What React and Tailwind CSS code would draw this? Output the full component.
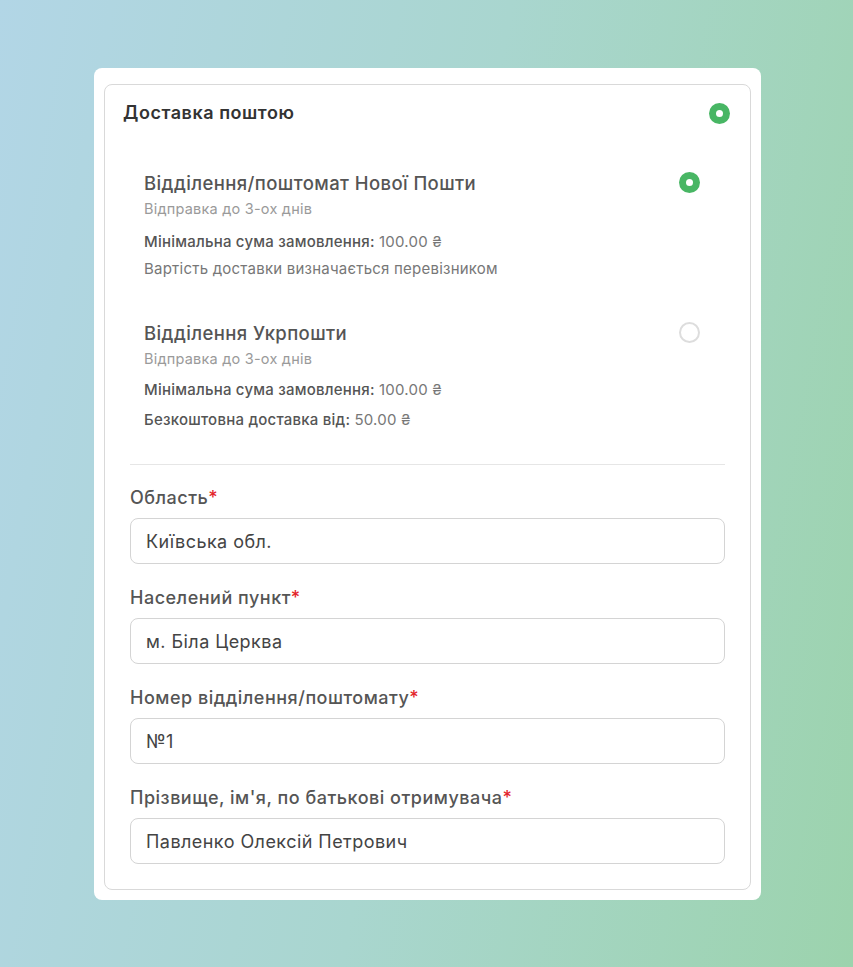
import React from "react";

function Radio({ checked }) {
  return checked ? (
    <span className="flex h-[21px] w-[21px] items-center justify-center rounded-full bg-[#48b664]">
      <span className="h-[7px] w-[7px] rounded-full bg-white" />
    </span>
  ) : (
    <span className="block h-[21px] w-[21px] rounded-full border-2 border-[#dddddd] bg-white" />
  );
}

function Option({ title, checked, lines }) {
  return (
    <div className="flex items-start justify-between pl-[39px] pr-[50px]">
      <div className="flex flex-col">
        <div className="text-[18.5px] leading-[24px] font-medium tracking-[0.022em] text-[#555555]">{title}</div>
        <div className="mt-[4px] text-[14.5px] leading-[20px] tracking-[0.015em] text-[#9a9a9a]">Відправка до 3-ох днів</div>
        {lines.map((l, i) => (
          <div key={i} className={`text-[15px] leading-[20px] tracking-[0.015em] text-[#777777] ${l.mt}`}>
            {l.label && <span className="font-medium text-[#555555]">{l.label} </span>}
            {l.value}
          </div>
        ))}
      </div>
      <div className="pt-[1px]">
        <Radio checked={checked} />
      </div>
    </div>
  );
}

function Field({ label, value }) {
  return (
    <div className="flex flex-col">
      <div className="text-[18px] leading-[24px] font-medium tracking-[0.028em] text-[#555555]">
        {label}
        <span className="text-[#e3252b]">*</span>
      </div>
      <div className="mt-[8px] flex h-[46px] items-center rounded-[8px] border border-[#d4d4d4] bg-white px-[15px] text-[18px] tracking-[0.025em] text-[#444444]">
        {value}
      </div>
    </div>
  );
}

export default function App() {
  return (
    <div
      className="flex min-h-[967px] w-full justify-start bg-[linear-gradient(100deg,#b2d6e6_0%,#a9d6cf_50%,#9cd3ad_100%)] pl-[94px] pt-[68px]"
      style={{ fontFamily: "Inter, 'Noto Sans', sans-serif" }}
    >
      <div className="h-[832px] w-[667px] rounded-[8px] bg-white p-[10px] pt-[16px]">
        <div className="h-[806px] rounded-[8px] border border-[#d9d9d9]">
          <div className="flex items-center justify-between pl-[18px] pr-[20px] pt-[16px]">
            <div className="text-[18px] leading-[24px] font-semibold tracking-[0.03em] text-[#333333]">Доставка поштою</div>
            <Radio checked />
          </div>
          <div className="mt-[46px] flex flex-col gap-[42px]">
            <Option
              title="Відділення/поштомат Нової Пошти"
              checked
              lines={[
                { label: "Мінімальна сума замовлення:", value: "100.00 ₴", mt: "mt-[13px]" },
                { label: "", value: "Вартість доставки визначається перевізником", mt: "mt-[7px]" },
              ]}
            />
            <Option
              title="Відділення Укрпошти"
              lines={[
                { label: "Мінімальна сума замовлення:", value: "100.00 ₴", mt: "mt-[11px]" },
                { label: "Безкоштовна доставка від:", value: "50.00 ₴", mt: "mt-[10px]" },
              ]}
            />
          </div>
          <div className="mx-[25px] mt-[34px] border-t border-[#e6e6e6]" />
          <div className="mx-[25px] mt-[21px] flex flex-col gap-[22px]">
            <Field label="Область" value="Київська обл." />
            <Field label="Населений пункт" value="м. Біла Церква" />
            <Field label="Номер відділення/поштомату" value="№1" />
            <Field label="Прізвище, ім'я, по батькові отримувача" value="Павленко Олексій Петрович" />
          </div>
        </div>
      </div>
    </div>
  );
}
